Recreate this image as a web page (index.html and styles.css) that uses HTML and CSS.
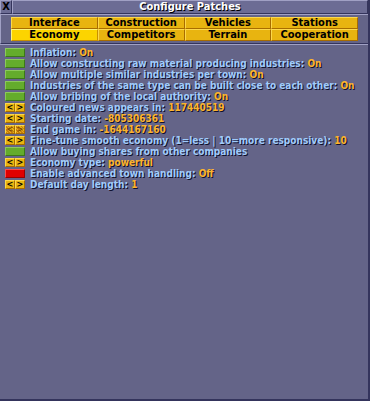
FILE: index.html
```html
<!DOCTYPE html>
<html>
<head>
<meta charset="utf-8">
<link rel="stylesheet" href="styles.css">
</head>
<body>
<div class="window">
  <div class="titlebar">
    <div class="close">X</div>
    <div class="caption">Configure Patches</div>
  </div>
  <div class="tabs">
    <div class="tab">Interface</div>
    <div class="tab">Construction</div>
    <div class="tab">Vehicles</div>
    <div class="tab">Stations</div>
    <div class="tab active">Economy</div>
    <div class="tab">Competitors</div>
    <div class="tab">Terrain</div>
    <div class="tab">Cooperation</div>
  </div>
  <div class="list">
    <div class="row"><span class="check on"></span><span class="label">Inflation: <b>On</b></span></div>
    <div class="row"><span class="check on"></span><span class="label">Allow constructing raw material producing industries: <b>On</b></span></div>
    <div class="row"><span class="check on"></span><span class="label">Allow multiple similar industries per town: <b>On</b></span></div>
    <div class="row"><span class="check on"></span><span class="label">Industries of the same type can be built close to each other: <b>On</b></span></div>
    <div class="row"><span class="check on"></span><span class="label">Allow bribing of the local authority: <b>On</b></span></div>
    <div class="row"><span class="arrows"><i>&lt;</i><i>&gt;</i></span><span class="label">Coloured news appears in: <b>117440519</b></span></div>
    <div class="row"><span class="arrows"><i>&lt;</i><i>&gt;</i></span><span class="label">Starting date: <b>-805306361</b></span></div>
    <div class="row"><span class="arrows disabled"><i>&lt;</i><i>&gt;</i></span><span class="label">End game in: <b>-1644167160</b></span></div>
    <div class="row"><span class="arrows"><i>&lt;</i><i>&gt;</i></span><span class="label">Fine-tune smooth economy (1=less | 10=more responsive): <b>10</b></span></div>
    <div class="row"><span class="check on"></span><span class="label">Allow buying shares from other companies</span></div>
    <div class="row"><span class="arrows"><i>&lt;</i><i>&gt;</i></span><span class="label">Economy type: <b>powerful</b></span></div>
    <div class="row"><span class="check off"></span><span class="label">Enable advanced town handling: <b>Off</b></span></div>
    <div class="row"><span class="arrows"><i>&lt;</i><i>&gt;</i></span><span class="label">Default day length: <b>1</b></span></div>
  </div>
</div>
</body>
</html>
```
FILE: styles.css
```css
html, body {
  margin: 0;
  padding: 0;
  background: #646488;
}
.window {
  width: 370px;
  height: 401px;
  box-sizing: border-box;
  background: #646488;
  border-right: 2px solid #34345c;
  border-bottom: 2px solid #34345c;
  font-family: "DejaVu Sans Condensed", "DejaVu Sans", sans-serif;
  font-weight: bold;
  font-size: 10px;
  display: flex;
  flex-direction: column;
}
.titlebar {
  display: flex;
  height: 14px;
}
.close {
  width: 12px;
  box-sizing: border-box;
  background: #6c6c94;
  border-top: 1px solid #a0a0c4;
  border-left: 1px solid #a0a0c4;
  border-right: 1px solid #34345c;
  border-bottom: 1px solid #34345c;
  color: #000;
  font-size: 11px;
  line-height: 12px;
  text-align: center;
}
.caption {
  flex: 1;
  box-sizing: border-box;
  background: #6c6c94;
  border-top: 1px solid #a0a0c4;
  border-left: 1px solid #a0a0c4;
  border-right: 1px solid #34345c;
  border-bottom: 1px solid #34345c;
  color: #fff;
  text-shadow: 1px 1px 0 #000;
  text-align: center;
  font-size: 11px;
  line-height: 12px;
}
.tabs {
  display: grid;
  grid-template-columns: repeat(4, 1fr);
  grid-auto-rows: 12px;
  row-gap: 0;
  padding: 2px 10px 2px 10px;
  border-left: 1px solid #a0a0c4;
  border-bottom: 1px solid #34345c;
  border-top: 1px solid #a0a0c4;
}
.tab {
  box-sizing: border-box;
  background: #e8b410;
  border-top: 1px solid #fcd84c;
  border-left: 1px solid #fcd84c;
  border-right: 1px solid #a86c00;
  border-bottom: 1px solid #a86c00;
  color: #000;
  text-align: center;
  font-size: 11px;
  line-height: 10px;
}
.tab.active {
  background: #fcd400;
  border-color: #fcf47c #c89000 #c89000 #fcf47c;
}
.list {
  display: flex;
  flex-direction: column;
  padding: 2px 0 0 5px;
  border-top: 1px solid #a0a0c4;
}
.row {
  display: flex;
  align-items: center;
  height: 11px;
}
.check {
  width: 20px;
  height: 9px;
  box-sizing: border-box;
  margin-right: 5px;
}
.check.on {
  background: #64ac2c;
  border: 1px solid #3c7818;
  border-top-color: #8cc85c;
  border-left-color: #8cc85c;
}
.check.off {
  background: #e00000;
  border: 1px solid #980000;
  border-top-color: #fc4c4c;
  border-left-color: #fc4c4c;
}
.arrows {
  display: flex;
  width: 20px;
  height: 9px;
  margin-right: 5px;
}
.arrows i {
  flex: 1;
  box-sizing: border-box;
  background: #e8b410;
  border: 1px solid #a86c00;
  border-top-color: #fcd84c;
  border-left-color: #fcd84c;
  font-style: normal;
  font-size: 9px;
  line-height: 7px;
  text-align: center;
  color: #000;
}
.arrows.disabled i {
  background: repeating-linear-gradient(45deg, #c87c14 0 1px, #e8b410 1px 2px);
  color: #7c4800;
}
.label {
  color: #a0ccfc;
  text-shadow: 1px 1px 0 #10102c;
  white-space: nowrap;
  font-size: 10px;
  line-height: 11px;
}
.label b {
  color: #fcb42c;
}
```
